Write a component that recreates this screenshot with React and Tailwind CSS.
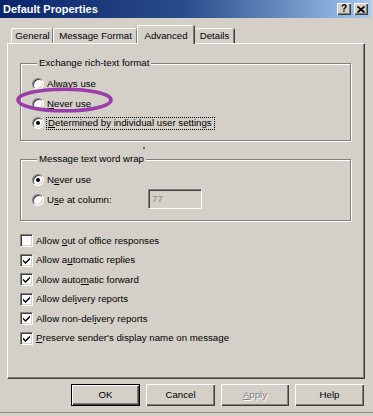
import React from "react";

const FONT = "font-['Liberation_Sans',Arial,sans-serif]";

function Radio({ checked }) {
  return (
    <span className="flex items-center justify-center w-[12px] h-[12px] shrink-0 rounded-full bg-white border border-t-[#808080] border-l-[#808080] border-r-white border-b-white shadow-[inset_1px_1px_0_#404040,inset_-1px_-1px_0_#d4d0c8]">
      {checked && <span className="w-[4px] h-[4px] rounded-full bg-black" />}
    </span>
  );
}

function Check({ checked }) {
  return (
    <span className="flex items-center justify-center w-[13px] h-[13px] shrink-0 bg-white border border-t-[#808080] border-l-[#808080] border-r-white border-b-white shadow-[inset_1px_1px_0_#404040,inset_-1px_-1px_0_#d4d0c8]">
      {checked && (
        <svg width="7" height="7" viewBox="0 0 7 7">
          <path d="M0 2.5 L2.5 5 L7 0.5 L7 2.5 L2.5 7 L0 4.5 Z" fill="#000" />
        </svg>
      )}
    </span>
  );
}

function Tab({ label, w, selected }) {
  if (selected) {
    return (
      <div
        className={`relative z-10 flex items-center justify-center pt-[1px] h-[19px] mb-[-1px] bg-[#d4d0c8] border-t border-l border-white rounded-tl-[2px] rounded-tr-[2px] shadow-[inset_-1px_0_0_#808080,1px_0_0_#404040] ${w}`}
      >
        {label}
      </div>
    );
  }
  return (
    <div
      className={`flex items-center justify-center h-[15px] bg-[#d4d0c8] border-t border-l border-white rounded-tl-[2px] rounded-tr-[2px] shadow-[inset_-1px_0_0_#808080,1px_0_0_#404040] ${w}`}
    >
      {label}
    </div>
  );
}

function Btn({ children, w = "w-[69px]", def }) {
  return (
    <div
      className={`flex items-center justify-center h-[22px] ${w} ${
        def
          ? "border border-black shadow-[inset_1px_1px_0_#fff,inset_-1px_-1px_0_#404040,inset_-2px_-2px_0_#808080]"
          : "shadow-[inset_1px_1px_0_#fff,inset_-1px_-1px_0_#404040,inset_-2px_-2px_0_#808080]"
      }`}
    >
      {children}
    </div>
  );
}

function CapBtn({ children }) {
  return (
    <div className="flex items-center justify-center w-[14px] h-[12px] bg-[#d4d0c8] shadow-[inset_1px_1px_0_#fff,inset_-1px_-1px_0_#404040,inset_-2px_-2px_0_#808080]">
      {children}
    </div>
  );
}

export default function App() {
  const checks = [
    { pre: "Allow ", u: "o", post: "ut of office responses", c: false, h: "h-[19px]" },
    { pre: "Allow a", u: "u", post: "tomatic replies", c: true, h: "h-[20px]" },
    { pre: "Allow auto", u: "m", post: "atic forward", c: true, h: "h-[19px]" },
    { pre: "Allow del", u: "i", post: "very reports", c: true, h: "h-[20px]" },
    { pre: "Allow non-del", u: "i", post: "very reports", c: true, h: "h-[19px]" },
    { pre: "", u: "P", post: "reserve sender's display name on message", c: true, h: "h-[20px]" },
  ];

  return (
    <div
      className={`relative w-[373px] h-[416px] overflow-hidden bg-[#d4d0c8] text-black text-[9.7px] leading-[12px] flex flex-col ${FONT}`}
    >
      {/* Title bar */}
      <div className="flex items-center justify-between h-[18px] mr-[2px] pl-[3px] pr-[3px] bg-gradient-to-r from-[#0a246a] via-[#2a4c8c] to-[#a6caf0]">
        <span className="text-white font-bold text-[11px] leading-[14px]">Default Properties</span>
        <div className="flex items-center gap-[3px]">
          <CapBtn>
            <span className="font-bold text-[10px] leading-[10px]">?</span>
          </CapBtn>
          <CapBtn>
            <svg width="8" height="7" viewBox="0 0 8 7">
              <path d="M0.5 0.5 L7.5 6.5 M7.5 0.5 L0.5 6.5" stroke="#000" strokeWidth="1.8" />
            </svg>
          </CapBtn>
        </div>
      </div>

      {/* Tabs */}
      <div className="flex items-end h-[18px] mt-[7px] pl-[11px]">
        <Tab label="General" w="w-[42px]" />
        <Tab label="Message Format" w="w-[84px]" />
        <Tab label="Advanced" w="w-[57px]" selected />
        <Tab label="Details" w="w-[40px]" />
      </div>

      {/* Panel */}
      <div className="flex flex-col ml-[7px] w-[358px] h-[336px] border-t border-l border-white border-r border-r-[#404040] border-b border-b-[#404040] shadow-[inset_-1px_-1px_0_#808080] pt-[13px] pl-[12px] pr-[13px]">
        {/* Group 1 */}
        <fieldset className="border border-[#808080] shadow-[inset_1px_1px_0_#fff,1px_1px_0_#fff] pl-[11px] pt-[5px] pb-[7px]">
          <legend className="ml-[5px] px-[2px] bg-[#d4d0c8]">Exchange rich-text format</legend>
          <div className="flex items-center gap-[3px] h-[20px]">
            <Radio />
            <span>Always use</span>
          </div>
          <div className="flex items-center gap-[3px] h-[19px]">
            <Radio />
            <span>
              <span className="underline">N</span>ever use
            </span>
          </div>
          <div className="flex items-center gap-[2px] h-[20px]">
            <Radio checked />
            <span className="border border-dotted border-black pl-[1px] pr-[2px] h-[13px] flex items-center">
              <span className="underline">D</span>etermined by individual user settings
            </span>
          </div>
        </fieldset>

        {/* stray dot */}
        <div className="h-[12px] pt-[6px] pl-[123px]">
          <div className="w-[2px] h-[2px] rounded-full bg-[#404040]" />
        </div>

        {/* Group 2 */}
        <fieldset className="border border-[#808080] shadow-[inset_1px_1px_0_#fff,1px_1px_0_#fff] pl-[11px] pt-[5px] pb-[10px]">
          <legend className="ml-[5px] px-[2px] bg-[#d4d0c8]">Message text word wrap</legend>
          <div className="flex items-center gap-[3px] h-[20px]">
            <Radio checked />
            <span>
              N<span className="underline">e</span>ver use
            </span>
          </div>
          <div className="flex items-center h-[20px]">
            <Radio />
            <span className="ml-[3px] w-[101px]">
              U<span className="underline">s</span>e at column:
            </span>
            <div className="flex items-center w-[54px] h-[20px] -mt-[2px] pl-[3px] text-[#8a8a8a] bg-[#d4d0c8] border border-t-[#808080] border-l-[#808080] border-r-white border-b-white shadow-[inset_1px_1px_0_#404040,inset_-1px_-1px_0_#d4d0c8]">
              77
            </div>
          </div>
        </fieldset>

        {/* Checkboxes */}
        <div className="flex flex-col mt-[10px]">
          {checks.map((c, i) => (
            <div key={i} className={`flex items-center gap-[3px] ${c.h}`}>
              <Check checked={c.c} />
              <span>
                {c.pre}
                <span className="underline">{c.u}</span>
                {c.post}
              </span>
            </div>
          ))}
        </div>
      </div>

      {/* Buttons */}
      <div className="flex justify-end gap-[6px] mt-[5px] pr-[9px]">
        <Btn def>OK</Btn>
        <Btn>Cancel</Btn>
        <Btn w="w-[68px]">
          <span className="text-[#808080] [text-shadow:1px_1px_0_#fff]">
            <span className="underline">A</span>pply
          </span>
        </Btn>
        <Btn>Help</Btn>
      </div>

      <div className="mt-[6px] h-[1px] bg-[#8c8c8c]" />

      {/* Purple highlight ellipse */}
      <svg
        className="absolute left-[16px] top-[87px] pointer-events-none"
        width="97"
        height="26"
        viewBox="0 0 97 26"
      >
        <ellipse cx="48.5" cy="13" rx="46.5" ry="10.8" fill="none" stroke="#9b3daa" strokeWidth="3.6" />
      </svg>
    </div>
  );
}
